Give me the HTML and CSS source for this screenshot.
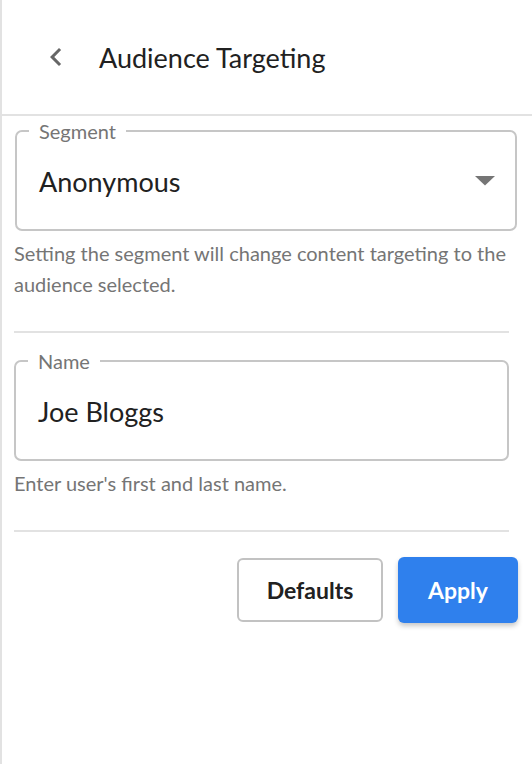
FILE: index.html
```html
<!DOCTYPE html>
<html lang="en">
<head>
<meta charset="utf-8">
<title>Audience Targeting</title>
<link rel="stylesheet" href="styles.css">
</head>
<body>
<div class="panel">
  <header class="header">
    <button class="back" aria-label="Back">
      <svg width="36" height="36" viewBox="0 0 24 24"><path d="M15.41 7.41L14 6l-6 6 6 6 1.41-1.41L10.83 12z" fill="#666"/></svg>
    </button>
    <h1 class="title">Audience Targeting</h1>
  </header>
  <main class="content">
    <fieldset class="field field-select">
      <legend class="field-label">Segment</legend>
      <div class="field-body">
        <span class="field-value">Anonymous</span>
        <svg class="caret" width="20" height="10" viewBox="0 0 20 10"><path d="M0 0h20L10 9.5z" fill="#757575"/></svg>
      </div>
    </fieldset>
    <p class="helper">Setting the segment will change content targeting to the audience selected.</p>
    <hr class="divider">
    <fieldset class="field field-text">
      <legend class="field-label">Name</legend>
      <div class="field-body">
        <span class="field-value">Joe Bloggs</span>
      </div>
    </fieldset>
    <p class="helper">Enter user's first and last name.</p>
    <hr class="divider">
    <div class="actions">
      <button class="btn btn-outline">Defaults</button>
      <button class="btn btn-primary">Apply</button>
    </div>
  </main>
</div>
</body>
</html>
```
FILE: styles.css
```css
* { box-sizing: border-box; }
html, body { margin: 0; padding: 0; background: #fff; }
body { font-family: "Lato", "Noto Sans", sans-serif; color: #212121; }

.panel {
  height: 764px;
  border-left: 2px solid #e2e2e2;
}

.header {
  height: 116px;
  border-bottom: 2px solid #e2e2e2;
  display: flex;
  align-items: center;
  padding-left: 36px;
}
.back {
  border: 0;
  background: none;
  padding: 0;
  width: 36px;
  height: 36px;
  display: flex;
}
.title {
  margin: 0 0 0 25px;
  font-size: 27px;
  font-weight: 400;
  color: #212121;
}

.content {
  padding: 0 23px 0 12px;
}

.field {
  margin: 5px 0 0 0;
  padding: 0 0 8px 0;
  border: 2px solid #c6c6c6;
  border-radius: 7px;
  min-width: 0;
}
.field-select {
  margin-left: 1px;
  margin-right: -8px;
}
.field-text {
  margin-top: 18px;
}
.field-label {
  margin-left: 12px;
  padding: 0 10px;
  font-size: 20px;
  line-height: 20px;
  color: #757575;
}
.field-body {
  height: 80px;
  display: flex;
  align-items: center;
  justify-content: space-between;
  padding: 0 20px 0 22px;
}
.field-value {
  font-size: 27px;
  color: #212121;
}

.helper {
  margin: 7px 0 0 0;
  font-size: 20px;
  line-height: 31px;
  color: #757575;
}

.divider {
  margin: 31px 0 0 0;
  border: 0;
  height: 2px;
  background: #e2e2e2;
}

.actions {
  margin: 25px -9px 0 0;
  display: flex;
  justify-content: flex-end;
  align-items: center;
  gap: 15px;
}
.btn {
  font-family: "Lato", "Noto Sans", sans-serif;
  font-size: 23px;
  font-weight: 700;
  border-radius: 6px;
}
.btn-outline {
  width: 146px;
  height: 64px;
  background: #fff;
  color: #212121;
  border: 2px solid #c2c2c2;
}
.btn-primary {
  width: 120px;
  height: 66px;
  background: #2f80ed;
  color: #fff;
  border: 0;
  box-shadow: 0 3px 5px rgba(0, 0, 0, 0.22);
}
```
